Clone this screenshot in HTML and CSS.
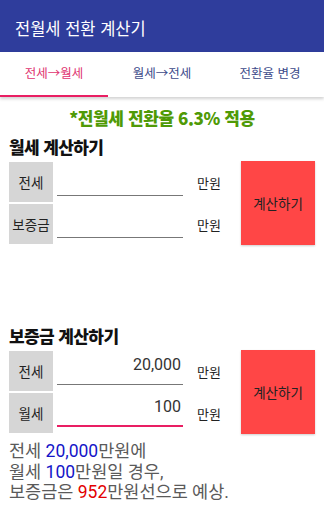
FILE: index.html
```html
<!DOCTYPE html>
<html lang="ko">
<head>
<meta charset="utf-8">
<link rel="stylesheet" href="styles.css">
</head>
<body>
<header class="appbar"><h1 class="appbar-title">전월세 전환 계산기</h1></header>
<nav class="tabs">
  <div class="tab tab-active">전세→월세</div>
  <div class="tab">월세→전세</div>
  <div class="tab">전환율 변경</div>
</nav>
<main class="content">
  <p class="notice">*전월세 전환율 6.3% 적용</p>
  <section class="calc">
    <h2 class="calc-title">월세 계산하기</h2>
    <div class="calc-body">
      <div class="rows">
        <div class="row"><span class="label">전세</span><span class="field"></span><span class="unit">만원</span></div>
        <div class="row"><span class="label">보증금</span><span class="field"></span><span class="unit">만원</span></div>
      </div>
      <button class="calc-btn">계산하기</button>
    </div>
  </section>
  <section class="calc calc-second">
    <h2 class="calc-title">보증금 계산하기</h2>
    <div class="calc-body">
      <div class="rows">
        <div class="row"><span class="label">전세</span><span class="field">20,000</span><span class="unit">만원</span></div>
        <div class="row"><span class="label">월세</span><span class="field field-focus">100</span><span class="unit">만원</span></div>
      </div>
      <button class="calc-btn">계산하기</button>
    </div>
  </section>
  <p class="result">전세 <span class="num-blue">20,000</span>만원에<br>월세 <span class="num-blue">100</span>만원일 경우,<br>보증금은 <span class="num-red">952</span>만원선으로 예상.</p>
</main>
</body>
</html>
```
FILE: styles.css
```css
* { box-sizing: border-box; }
html, body { margin: 0; padding: 0; }
body {
  width: 324px;
  height: 512px;
  overflow: hidden;
  background: #fff;
  font-family: Roboto, "Noto Sans CJK KR", sans-serif;
  color: #222;
}
.appbar {
  height: 52px;
  background: #2f3d9c;
  display: flex;
  align-items: center;
  padding-left: 15px;
  padding-top: 4px;
}
.appbar-title {
  margin: 0;
  font-size: 16.5px;
  font-weight: 400;
  color: #fff;
  font-family: "Noto Sans CJK KR", sans-serif;
}
.tabs {
  height: 45px;
  display: grid;
  grid-template-columns: repeat(3, 1fr);
  box-shadow: 0 2px 3px rgba(0,0,0,0.18);
  position: relative;
}
.tab {
  display: flex;
  align-items: center;
  justify-content: center;
  font-size: 12.5px;
  color: #3c4a8a;
  font-family: "Noto Sans CJK KR", sans-serif;
  padding-bottom: 2px;
  border-bottom: 2px solid transparent;
}
.tab-active {
  color: #e0336f;
  border-bottom-color: #e91e63;
}
.content {
  padding: 0 9px;
}
.notice {
  margin: 8px 0 0;
  text-align: center;
  font-size: 17px;
  line-height: 25px;
  font-weight: 900;
  color: #4f9a06;
  font-family: "Noto Sans CJK KR", sans-serif;
  letter-spacing: -0.4px;
}
.calc-title {
  margin: 4px 0 0;
  font-size: 17px;
  line-height: 26px;
  font-weight: 900;
  color: #111;
  font-family: "Noto Sans CJK KR", sans-serif;
  letter-spacing: -0.6px;
}
.calc-second { margin-top: 78px; }
.calc-body {
  display: flex;
  margin-top: 1px;
}
.rows {
  display: flex;
  flex-direction: column;
  gap: 2px;
  padding: 1px 0;
  flex: none;
}
.row {
  display: flex;
  height: 40px;
  align-items: center;
  white-space: nowrap;
}
.label {
  flex: none;
  width: 44px;
  height: 40px;
  background: #d6d6d6;
  display: flex;
  align-items: center;
  justify-content: center;
  font-size: 13.5px;
  color: #222;
  font-family: "Noto Sans CJK KR", sans-serif;
}
.field {
  flex: none;
  width: 126px;
  height: 34px;
  margin-left: 4px;
  align-self: flex-start;
  border-bottom: 1px solid #777;
  text-align: right;
  font-size: 16px;
  line-height: 28px;
  padding-right: 2px;
  color: #333;
}
.field-focus {
  border-bottom: 2px solid #e91e63;
}
.unit {
  flex: none;
  width: 24px;
  margin-left: 14px;
  font-size: 13px;
  color: #222;
  font-family: "Noto Sans CJK KR", sans-serif;
}
.calc-btn {
  flex: none;
  margin-left: 20px;
  width: 74px;
  border: none;
  background: #ff4646;
  color: #222;
  font-size: 13.5px;
  font-family: "Noto Sans CJK KR", sans-serif;
  padding: 0;
  box-shadow: 0 1px 2px rgba(0,0,0,0.2);
}
.result {
  margin: 7px 0 0;
  font-size: 17.5px;
  line-height: 20.7px;
  color: #5a5a5a;
}
.num-blue { color: #1515c8; }
.num-red { color: #e30000; }
```
